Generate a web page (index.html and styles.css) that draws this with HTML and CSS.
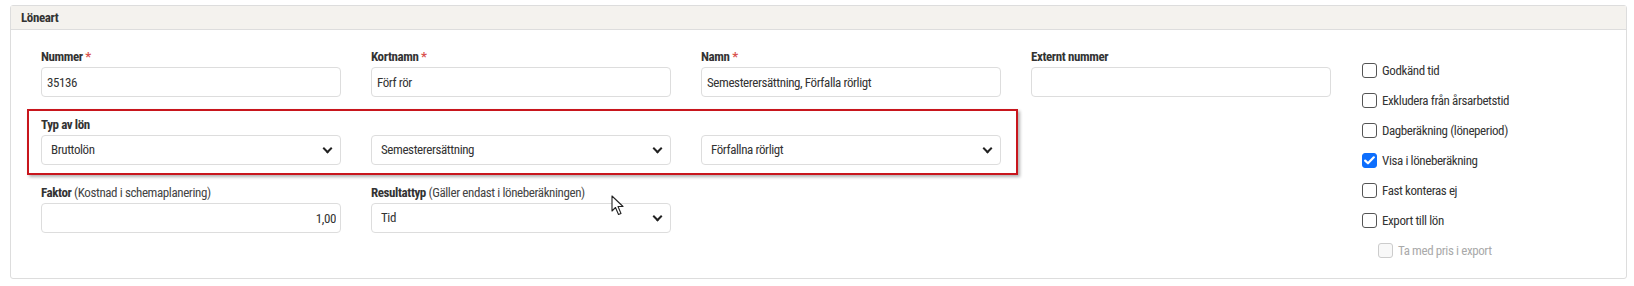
FILE: index.html
```html
<!DOCTYPE html>
<html lang="sv">
<head>
    <meta charset="UTF-8">
    <meta name="viewport" content="width=device-width, initial-scale=1.0">
    <title>Löneart</title>
    <link rel="stylesheet" href="styles.css">
</head>
<body>
    <div class="card">
        <div class="card-header">Löneart</div>

        <div class="card-body">
            <div class="fields">
                <div class="row">
                    <div class="form-group">
                        <label>Nummer <span class="req">*</span></label>
                        <input type="text" value="35136">
                    </div>
                    <div class="form-group">
                        <label>Kortnamn <span class="req">*</span></label>
                        <input type="text" value="Förf rör">
                    </div>
                    <div class="form-group">
                        <label>Namn <span class="req">*</span></label>
                        <input type="text" value="Semesterersättning, Förfalla rörligt">
                    </div>
                    <div class="form-group">
                        <label>Externt nummer</label>
                        <input type="text" value="">
                    </div>
                </div>

                <div class="row highlight">
                    <div class="form-group">
                        <label>Typ av lön</label>
                        <div class="select">Bruttolön</div>
                    </div>
                    <div class="form-group">
                        <label>&nbsp;</label>
                        <div class="select">Semesterersättning</div>
                    </div>
                    <div class="form-group">
                        <label>&nbsp;</label>
                        <div class="select">Förfallna rörligt</div>
                    </div>
                </div>

                <div class="row">
                    <div class="form-group">
                        <label>Faktor <span class="hint">(Kostnad i schemaplanering)</span></label>
                        <input type="text" class="num" value="1,00">
                    </div>
                    <div class="form-group">
                        <label>Resultattyp <span class="hint">(Gäller endast i löneberäkningen)</span></label>
                        <div class="select">Tid</div>
                        <svg class="cursor" width="14" height="22" viewBox="0 0 14 22">
                            <path d="M1 1 L1 16 L4.5 12.5 L7.5 19.5 L10 18.5 L7 11.5 L12 11.5 Z" fill="#fff" stroke="#222" stroke-width="1.1" stroke-linejoin="round"/>
                        </svg>
                    </div>
                </div>
            </div>

            <div class="checks">
                <div class="check"><span class="box"></span>Godkänd tid</div>
                <div class="check"><span class="box"></span>Exkludera från årsarbetstid</div>
                <div class="check"><span class="box"></span>Dagberäkning (löneperiod)</div>
                <div class="check"><span class="box checked"><svg width="11" height="9" viewBox="0 0 11 9"><path d="M1.2 4.6 L4 7.3 L9.8 1.3" fill="none" stroke="#fff" stroke-width="2.2" stroke-linecap="round" stroke-linejoin="round"/></svg></span>Visa i löneberäkning</div>
                <div class="check"><span class="box"></span>Fast konteras ej</div>
                <div class="check"><span class="box"></span>Export till lön</div>
                <div class="check sub disabled"><span class="box"></span>Ta med pris i export</div>
            </div>
        </div>
    </div>
</body>
</html>
```

FILE: styles.css
```css
body {
    font-family: "Roboto Condensed", "Roboto", sans-serif;
    font-size: 13px;
    letter-spacing: -0.4px;
    color: #333;
    background-color: #fff;
    margin: 0;
    padding: 5px 7px 7px 10px;
}
.card {
    border: 1px solid #ddd;
    border-radius: 3px;
    background-color: #fff;
}
.card-header {
    background-color: #f4f2ee;
    border-bottom: 1px solid #ddd;
    height: 23px;
    line-height: 23px;
    padding-left: 10px;
    font-weight: bold;
    color: #333;
}
.card-body {
    display: flex;
    gap: 31px;
    padding: 19px 0 13px 30px;
}
.fields {
    display: flex;
    flex-direction: column;
}
.row {
    display: grid;
    grid-template-columns: repeat(4, 300px);
    column-gap: 30px;
}
.highlight {
    grid-template-columns: repeat(3, 300px);
    align-self: flex-start;
    margin: 12px 0 10px -14px;
    padding: 6px 15px 8px 12px;
    border: 2px solid #c8161d;
    box-shadow: 2px 2px 3px rgba(0, 0, 0, 0.3);
}
.form-group {
    position: relative;
}
label {
    display: block;
    height: 16px;
    line-height: 16px;
    margin-bottom: 2px;
    font-weight: bold;
    color: #333;
    white-space: nowrap;
}
.req {
    color: #d9534f;
}
.hint {
    font-weight: normal;
    color: #444;
}
input[type="text"] {
    display: block;
    width: 100%;
    height: 30px;
    box-sizing: border-box;
    padding: 0 5px;
    border: 1px solid #ddd;
    border-radius: 4px;
    font-family: inherit;
    font-size: 13px;
    letter-spacing: inherit;
    color: #333;
    outline: none;
}
input.num {
    text-align: right;
    padding-right: 4px;
}
.select {
    height: 30px;
    box-sizing: border-box;
    padding: 0 9px;
    line-height: 28px;
    border: 1px solid #ddd;
    border-radius: 4px;
    color: #333;
    position: relative;
}
.select::after {
    content: "";
    position: absolute;
    right: 9px;
    top: 9px;
    width: 5px;
    height: 5px;
    border-right: 2.5px solid #222;
    border-bottom: 2.5px solid #222;
    transform: rotate(45deg);
}
.cursor {
    position: absolute;
    left: 240px;
    top: 10px;
}
.checks {
    display: flex;
    flex-direction: column;
    padding-top: 6px;
}
.check {
    display: flex;
    align-items: center;
    height: 30px;
    color: #333;
    white-space: nowrap;
}
.box {
    width: 15px;
    height: 15px;
    box-sizing: border-box;
    border: 1px solid #555;
    border-radius: 3px;
    margin-right: 5px;
    display: flex;
    align-items: center;
    justify-content: center;
}
.box.checked {
    background-color: #0d6efd;
    border-color: #0d6efd;
}
.check.sub {
    padding-left: 16px;
}
.check.disabled {
    color: #aaa;
}
.check.disabled .box {
    border-color: #ccc;
    background-color: #f8f8f8;
}
```
